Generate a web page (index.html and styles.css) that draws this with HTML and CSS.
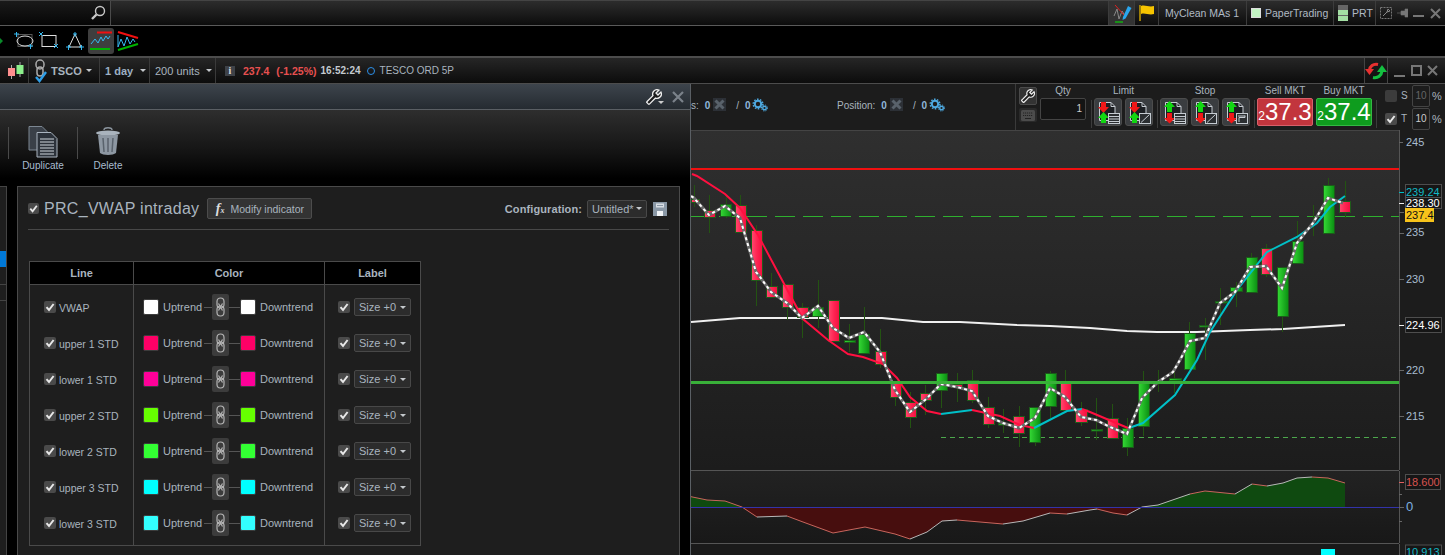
FILE: index.html
```html
<!DOCTYPE html>
<html lang="en">
<head>
<meta charset="utf-8">
<title>PRC_VWAP intraday</title>
<link rel="stylesheet" href="styles.css">
</head>
<body>
<svg class="defs" width="0" height="0" aria-hidden="true">
  <defs>
    <linearGradient id="gu" x1="0" x2="1" y1="0" y2="0"><stop offset="0" stop-color="#35d935"/><stop offset="1" stop-color="#0a8f12"/></linearGradient>
    <linearGradient id="gd" x1="0" x2="1" y1="0" y2="0"><stop offset="0" stop-color="#ff4a70"/><stop offset=".5" stop-color="#ff2452"/><stop offset="1" stop-color="#f0103f"/></linearGradient>
    <polyline id="close" points="691,196 694,198 709,215 725,206 740,218 756,272 760,277 771,292 787,303 802,318 818,306 833,328 849,338 864,332 880,352 895,390 910,412 925,400 941,384 957,387 972,391 988,416 1003,423 1019,428 1035,418 1050,388 1065,397 1081,417 1096,420 1110,427 1127,434 1142,398 1158,382 1173,372 1180,360 1190,341 1205,338 1220,303 1235,292 1250,267 1266,266 1282,288 1297,243 1313,223 1328,198 1343,203"/>
    <symbol id="tick" viewBox="0 0 12 12"><path d="M2.500 6.200 5 9l4.600-6" fill="none" stroke="#e8e8e8" stroke-width="2"/></symbol>
    <symbol id="chain" viewBox="0 0 17 26"><g fill="none" stroke="#b4b4b4" stroke-width="1.200"><rect x="5" y="4" width="7" height="10" rx="3.500"/><rect x="5" y="12" width="7" height="10" rx="3.500"/><path d="M6.500 9.500 10.500 16.500M10.500 9.500 6.500 16.500"/></g></symbol>
    <symbol id="wrench" viewBox="0 0 24 24"><path transform="translate(24 0) scale(-1 1)" d="M22.700 19l-9.100-9.100c.9-2.300.4-5-1.500-6.900-2-2-5-2.400-7.400-1.300L9 6 6 9 1.600 4.700C.4 7.100.9 10.100 2.900 12.100c1.900 1.900 4.600 2.400 6.900 1.500l9.100 9.100c.4.4 1 .4 1.400 0l2.300-2.300c.5-.4.5-1.100.1-1.400z" fill="#1c1c1c" stroke="#eee" stroke-width="2"/></symbol>
    <symbol id="gears" viewBox="0 0 16 14"><g fill="none" stroke="#4ea9e0"><circle cx="6" cy="6" r="3.200" stroke-width="2"/><circle cx="6" cy="6" r="4.800" stroke-width="1.400" stroke-dasharray="1.600 1.400"/><circle cx="12.500" cy="10" r="1.800" stroke-width="1.400"/><circle cx="12.500" cy="10" r="3" stroke-width="1" stroke-dasharray="1.200 1.200"/></g></symbol>
    <symbol id="cross" viewBox="0 0 13 13"><rect width="13" height="13" fill="#2c3036"/><path d="M2.500 2.500 10.500 10.500M10.500 2.500 2.500 10.500" stroke="#59626b" stroke-width="3"/></symbol>
    <symbol id="page" viewBox="0 0 24 24"><path d="M3.500 2.500H15l4 4v14H3.500z" fill="#1b1e22" stroke="#c6ccd2"/><path d="M15 2.500v4h4" fill="none" stroke="#c6ccd2"/></symbol>
    <symbol id="rg" viewBox="0 0 24 24"><path d="M5 2h5v5h3l-5.500 6L2 7h3z" fill="#f01818"/><path d="M7.500 12 13 18h-3v5H5v-5H2z" fill="#12d612"/></symbol>
    <symbol id="gr" viewBox="0 0 24 24"><path d="M7.500 1 13 7h-3v5H5V7H2z" fill="#12d612"/><path d="M5 13h5v5h3l-5.500 5.500L2 18h3z" fill="#f01818"/></symbol>
    <symbol id="lines" viewBox="0 0 24 24"><rect x="12.500" y="13.500" width="11" height="10" fill="#2b2e31" stroke="#c6ccd2"/><path d="M13 16.500h10M13 19h10M13 21.500h10" stroke="#c6ccd2"/></symbol>
    <symbol id="diag" viewBox="0 0 24 24"><rect x="12.500" y="13.500" width="11" height="10" fill="#2b2e31" stroke="#c6ccd2"/><path d="M14 22.500 22.500 14.500" stroke="#c6ccd2"/></symbol>
    <symbol id="step" viewBox="0 0 24 24"><rect x="12.500" y="13.500" width="11" height="10" fill="#2b2e31" stroke="#c6ccd2"/><path d="M15 22v-4.500h6v-2" fill="none" stroke="#c6ccd2"/><path d="M14 16h7" stroke="#c6ccd2"/></symbol>
  </defs>
</svg>

<div class="app">
  <header class="topbar">
    <div class="search">
      <svg class="ico-search" viewBox="0 0 16 16"><circle cx="10" cy="6" r="4.500" fill="none" stroke="#c8c8c8" stroke-width="1.400"/><path d="M6.500 9.500 2 14" stroke="#c8c8c8" stroke-width="2.400"/></svg>
    </div>
    <div class="grow"></div>
    <div class="top-cell pen"><svg width="20" height="20" viewBox="0 0 20 20"><path d="M2 13 5 6l2 10 3-8 2 3" fill="none" stroke="#888"/><path d="M3 2l9 10" stroke="#e02020"/><path d="M3 19h8" stroke="#12b012" stroke-width="1.500"/><path d="M11 14 16 3l3.500 2-6 10.500-3 1.500z" fill="#2aa6ee"/></svg></div>
    <div class="top-cell flag"><svg width="16" height="18" viewBox="0 0 16 18"><path d="M1 1v16" stroke="#c99f00" stroke-width="1.500"/><path d="M2 2c4-1.500 8 1.500 13 0v8c-5 1.500-9-1.500-13 0z" fill="#f6c400"/></svg></div>
    <div class="top-cell txt w88">MyClean MAs 1</div>
    <div class="top-cell txt w87"><span class="paper"></span>PaperTrading</div>
    <div class="top-cell txt w42"><span class="prt"><i></i><i></i></span>PRT</div>
    <div class="win-tools">
      <svg class="dash-w" width="12" height="12" viewBox="0 0 12 12"><rect x=".5" y=".5" width="11" height="11" fill="none" stroke="#777" stroke-dasharray="2 1"/><path d="M3 9 7 5l1-3 2 2-3 1" fill="none" stroke="#888"/></svg>
      <svg width="11" height="10" viewBox="0 0 11 10"><path d="M0 5h4M4 3h4V1l3 0v8H8V7H4z" fill="#777" stroke="#777" stroke-width=".6"/></svg>
      <span class="min"></span>
      <svg width="11" height="11" viewBox="0 0 11 11"><path d="M1 1 10 10M10 1 1 10" stroke="#777" stroke-width="2"/></svg>
    </div>
  </header>

  <nav class="tools">
    <span class="stub"></span>
    <svg class="tool t-first" width="20" height="20" viewBox="0 0 20 20"><rect x="4" y="3.500" width="14" height="12" fill="none" stroke="#555"/><ellipse cx="11" cy="10" rx="8" ry="5" fill="none" stroke="#ddd"/><path d="M0 3h5M2.500 1v5M14 15h5M16.500 13v5" stroke="#35b8f0"/></svg>
    <svg class="tool" width="22" height="20" viewBox="0 0 22 20"><rect x="4" y="4.500" width="14" height="11" fill="none" stroke="#ddd"/><path d="M1 1 5 5M5 1 1 5M16 13l4 4M20 13l-4 4" stroke="#35b8f0"/></svg>
    <svg class="tool t-last" width="20" height="20" viewBox="0 0 20 20"><path d="M10 3 4 16h12z" fill="none" stroke="#ddd"/><path d="M10 1v5M8 3h4M1 16h5M3.500 14v5M14 16h5M16.500 14v5" stroke="#35b8f0"/></svg>
    <div class="tool-on"><svg width="22" height="20" viewBox="0 0 22 20"><path d="M7 1.500h15" stroke="#f01010" stroke-width="2"/><path d="M0 18h20" stroke="#00b400" stroke-width="2"/><path d="M1 13l4-5 3 4 3-6 2 4 3-5 2 3 2-3" fill="none" stroke="#35b8f0"/></svg></div>
    <svg class="tool tri" width="22" height="20" viewBox="0 0 22 20"><path d="M1 1 21 7" stroke="#f01010" stroke-width="2"/><path d="M1 19 21 13" stroke="#00b400" stroke-width="2"/><path d="M1 4v12l3-8 3 7 3-9 3 7 3-5 2 3" fill="none" stroke="#35b8f0"/></svg>
  </nav>

  <div class="chart-head">
    <div class="ch-cell candle"><svg width="18" height="18" viewBox="0 0 18 18"><path d="M4.500 3v14M13 0v15" stroke="#aaa"/><rect x="1" y="6" width="7" height="8" fill="#ff8f8f"/><rect x="9.500" y="3" width="7" height="9" fill="#8cf08c"/></svg></div>
    <div class="ch-cell sym"><svg width="14" height="24" viewBox="0 0 14 24"><g fill="none" stroke="#aaa" stroke-width="1.500"><rect x="2" y="1" width="8" height="9" rx="4"/><rect x="3" y="8" width="6" height="9" rx="3"/></g><path d="M2 18l3.500 4L12 13" fill="none" stroke="#2f9fe8" stroke-width="2.400"/></svg><b class="tick-name">TSCO</b><span class="caret"></span></div>
    <div class="ch-cell day"><b>1 day</b><span class="caret"></span></div>
    <div class="ch-cell units">200 units<span class="caret"></span></div>
    <div class="quote">
      <span class="info">i</span>
      <b class="red">237.4</b>
      <b class="red pct">(-1.25%)</b>
      <b class="time">16:52:24</b>
      <span class="dot"></span>
      <span class="name">TESCO ORD 5P</span>
    </div>
    <div class="grow"></div>
    <div class="sync"><svg width="22" height="20" viewBox="0 0 22 20"><path d="M13 3.500C8 2.500 5 5.500 4.500 9" fill="none" stroke="#e83030" stroke-width="3"/><path d="M0 8h9l-4.500 6z" fill="#e83030"/><path d="M8 16.500c5 1 8.500-2 9-6.500" fill="none" stroke="#14c040" stroke-width="3"/><path d="M12 11h10l-5-7z" fill="#14c040"/></svg></div>
    <div class="win-tools wide">
      <span class="min"></span>
      <span class="max"></span>
      <svg width="11" height="11" viewBox="0 0 11 11"><path d="M1 1 10 10M10 1 1 10" stroke="#777" stroke-width="2"/></svg>
    </div>
  </div>

  <main class="work">
    <section class="dialog">
      <div class="dlg-title">
        <svg class="dlg-wrench" width="16" height="16"><use href="#wrench"/></svg>
        <span class="wr-caret"></span>
        <svg width="12" height="12" viewBox="0 0 12 12"><path d="M1 1 11 11M11 1 1 11" stroke="#7b828a" stroke-width="2.200"/></svg>
      </div>
      <div class="dlg-tools">
        <span class="vsep"></span>
        <div class="act dup">
          <svg width="30" height="32" viewBox="0 0 30 32"><path d="M1 .500H14l5 5V24H1z" fill="#3a4048" stroke="#7c8792"/><path d="M9 6.500H23l6 6V31H9z" fill="#2c323a" stroke="#aab4bf"/><path d="M12 13h14M12 16h14M12 19h14M12 22h14M12 25h14M12 28h14" stroke="#cfd6dc"/></svg>
          <span>Duplicate</span>
        </div>
        <span class="vsep"></span>
        <div class="act del">
          <svg width="26" height="28" viewBox="0 0 26 28"><ellipse cx="13" cy="6" rx="12" ry="2.600" fill="#a9b3bd"/><path d="M9 3c0-3 8-3 8 0" fill="none" stroke="#8a939c" stroke-width="1.500"/><path d="M3 8h20l-2 18c-3 2.500-13 2.500-16 0z" fill="#8d97a2"/><path d="M8 11l1 14M13 11v14M18 11l-1 14" stroke="#59626c" stroke-width="1.500"/></svg>
          <span>Delete</span>
        </div>
      </div>
      <div class="dlg-body">
        <aside class="side">
          <div class="side-sel"></div>
          <div class="side-row"></div>
        </aside>
        <div class="panel">
          <div class="panel-head">
            <label class="title"><span class="chk small"><svg><use href="#tick"/></svg></span>PRC_VWAP intraday</label>
            <button class="modify"><i class="fx">f<sub>x</sub></i>Modify indicator</button>
            <div class="grow"></div>
            <b class="conf">Configuration:</b>
            <span class="select conf-sel">Untitled*<span class="caret"></span></span>
            <svg class="save" width="14" height="14" viewBox="0 0 14 14"><path d="M0 0h14v14H0z" fill="#8a98a6"/><path d="M3 1.500h8v4H3z" fill="#d8dee4"/><path d="M4 3.500h6" stroke="#8a98a6"/><path d="M4 9h6v5H4z" fill="#f0f3f5"/></svg>
          </div>
          <table class="lines">
            <thead><tr><th class="c1">Line</th><th class="c2">Color</th><th class="c3">Label</th></tr></thead>
            <tbody>
              <tr class="first"><td><div class="line-cell"><span class="chk"><svg><use href="#tick"/></svg></span><span class="ln">VWAP</span></div></td>
                <td><div class="color-cell"><span class="sw sw-white"></span><span class="up">Uptrend</span><span class="dash"></span><span class="link"><svg width="17" height="26"><use href="#chain"/></svg></span><span class="dash dash-r"></span><span class="sw sw-white"></span><span class="down">Downtrend</span></div></td>
                <td><div class="label-cell"><span class="chk"><svg><use href="#tick"/></svg></span><span class="select">Size +0<span class="caret"></span></span></div></td></tr>
              <tr><td><div class="line-cell"><span class="chk"><svg><use href="#tick"/></svg></span><span class="ln">upper 1 STD</span></div></td>
                <td><div class="color-cell"><span class="sw sw-u1"></span><span class="up">Uptrend</span><span class="dash"></span><span class="link"><svg width="17" height="26"><use href="#chain"/></svg></span><span class="dash dash-r"></span><span class="sw sw-u1"></span><span class="down">Downtrend</span></div></td>
                <td><div class="label-cell"><span class="chk"><svg><use href="#tick"/></svg></span><span class="select">Size +0<span class="caret"></span></span></div></td></tr>
              <tr><td><div class="line-cell"><span class="chk"><svg><use href="#tick"/></svg></span><span class="ln">lower 1 STD</span></div></td>
                <td><div class="color-cell"><span class="sw sw-l1"></span><span class="up">Uptrend</span><span class="dash"></span><span class="link"><svg width="17" height="26"><use href="#chain"/></svg></span><span class="dash dash-r"></span><span class="sw sw-l1"></span><span class="down">Downtrend</span></div></td>
                <td><div class="label-cell"><span class="chk"><svg><use href="#tick"/></svg></span><span class="select">Size +0<span class="caret"></span></span></div></td></tr>
              <tr><td><div class="line-cell"><span class="chk"><svg><use href="#tick"/></svg></span><span class="ln">upper 2 STD</span></div></td>
                <td><div class="color-cell"><span class="sw sw-u2"></span><span class="up">Uptrend</span><span class="dash"></span><span class="link"><svg width="17" height="26"><use href="#chain"/></svg></span><span class="dash dash-r"></span><span class="sw sw-u2"></span><span class="down">Downtrend</span></div></td>
                <td><div class="label-cell"><span class="chk"><svg><use href="#tick"/></svg></span><span class="select">Size +0<span class="caret"></span></span></div></td></tr>
              <tr><td><div class="line-cell"><span class="chk"><svg><use href="#tick"/></svg></span><span class="ln">lower 2 STD</span></div></td>
                <td><div class="color-cell"><span class="sw sw-l2"></span><span class="up">Uptrend</span><span class="dash"></span><span class="link"><svg width="17" height="26"><use href="#chain"/></svg></span><span class="dash dash-r"></span><span class="sw sw-l2"></span><span class="down">Downtrend</span></div></td>
                <td><div class="label-cell"><span class="chk"><svg><use href="#tick"/></svg></span><span class="select">Size +0<span class="caret"></span></span></div></td></tr>
              <tr><td><div class="line-cell"><span class="chk"><svg><use href="#tick"/></svg></span><span class="ln">upper 3 STD</span></div></td>
                <td><div class="color-cell"><span class="sw sw-u3"></span><span class="up">Uptrend</span><span class="dash"></span><span class="link"><svg width="17" height="26"><use href="#chain"/></svg></span><span class="dash dash-r"></span><span class="sw sw-u3"></span><span class="down">Downtrend</span></div></td>
                <td><div class="label-cell"><span class="chk"><svg><use href="#tick"/></svg></span><span class="select">Size +0<span class="caret"></span></span></div></td></tr>
              <tr class="last"><td><div class="line-cell"><span class="chk"><svg><use href="#tick"/></svg></span><span class="ln">lower 3 STD</span></div></td>
                <td><div class="color-cell"><span class="sw sw-l3"></span><span class="up">Uptrend</span><span class="dash"></span><span class="link"><svg width="17" height="26"><use href="#chain"/></svg></span><span class="dash dash-r"></span><span class="sw sw-l3"></span><span class="down">Downtrend</span></div></td>
                <td><div class="label-cell"><span class="chk"><svg><use href="#tick"/></svg></span><span class="select">Size +0<span class="caret"></span></span></div></td></tr>
            </tbody>
          </table>
        </div>
      </div>
    </section>

    <section class="chart-pane">
      <div class="order">
        <div class="counts">
          <span class="cnt c-a">s:<em>0</em><svg width="13" height="13"><use href="#cross"/></svg><span class="slash">/ <em class="e2">0</em></span><svg class="gr" width="16" height="14"><use href="#gears"/></svg></span>
          <span class="cnt c-b">Position:<em>0</em><svg width="13" height="13"><use href="#cross"/></svg><span class="slash">/ <em class="e2">0</em></span><svg class="gr" width="16" height="14"><use href="#gears"/></svg></span>
        </div>
        <div class="order-tools">
          <button class="sq sq-w"><svg width="14" height="14"><use href="#wrench"/></svg></button>
          <button class="sq sq-k"><svg width="14" height="11" viewBox="0 0 14 11"><rect width="14" height="11" rx="1.500" fill="#4c4c4c"/><path d="M2 3h10M2 5.500h10" stroke="#222" stroke-dasharray="1.200 .8"/><path d="M4 8.500h6" stroke="#222"/></svg></button>
        </div>
        <div class="og og-qty"><span class="og-l">Qty</span><span class="qty">1</span></div>
        <span class="osep"></span>
        <div class="og og-limit"><span class="og-l">Limit</span><div class="btns">
          <button class="ob"><svg width="24" height="24"><use href="#page"/><use href="#rg"/><use href="#lines"/></svg></button>
          <button class="ob"><svg width="24" height="24"><use href="#page"/><use href="#rg"/><use href="#diag"/></svg></button>
        </div></div>
        <span class="osep"></span>
        <div class="og og-stop"><span class="og-l">Stop</span><div class="btns">
          <button class="ob"><svg width="24" height="24"><use href="#page"/><use href="#gr"/><use href="#lines"/></svg></button>
          <button class="ob"><svg width="24" height="24"><use href="#page"/><use href="#gr"/><use href="#diag"/></svg></button>
          <button class="ob"><svg width="24" height="24"><use href="#page"/><use href="#gr"/><use href="#step"/></svg></button>
        </div></div>
        <span class="osep"></span>
        <div class="og og-mkt"><span class="og-l">Sell MKT</span><div class="mkt sell"><small>2</small>37.3</div></div>
        <div class="og og-mkt og-buy"><span class="og-l">Buy MKT</span><div class="mkt buy"><small>2</small>37.4</div></div>
        <span class="osep"></span>
        <div class="st">
          <div class="st-row"><span class="chk big off"></span><span class="st-l">S</span><span class="pctbox dim">10</span><span class="pc">%</span></div>
          <div class="st-row"><span class="chk big"><svg><use href="#tick"/></svg></span><span class="st-l">T</span><span class="pctbox">10</span><span class="pc">%</span></div>
        </div>
      </div>

      <div class="charts">
        <svg class="plot" viewBox="691 130 708 340" width="708" height="340">
          <path class="p-top" d="M691 130.500H1399"/>
          <path class="r-line" d="M691 169H1399"/>
          <path class="g-dash" d="M691 216.500H1399"/>
          <path class="g-short" d="M941 437.500H1399"/>
          <polyline class="vwap" points="691,322 740,318 882,318 923,322 960,322 1017,325 1050,326 1090,328 1127,331 1157,332 1197,332 1250,330 1283,329 1345,325"/>
          <path class="wick" d="M694.500 185V207M709.500 195V233M726.500 195V218M740.500 195V232M756.500 225V306M771.500 273V297M787.500 284V320M802.500 303V338M818.500 280V328M833.500 300V341M849.500 324V352M864.500 307V334M880.500 329V368M895.500 382V406M910.500 392V428M925.500 385V415M941.500 373V408M957.500 373V402M972.500 370V403M988.500 397V428M1003.500 409V433M1019.500 406V447M1035.500 407V446M1050.500 371V418M1065.500 370V410M1081.500 402V426M1096.500 398V440M1112.500 404V438M1127.500 418V456M1143.500 371V436M1158.500 370V392M1174.500 372V393M1189.500 322V369M1205.500 318V360M1220.500 288V325M1236.500 282V307M1251.500 253V292M1266.500 244V277M1282.500 316V332M1297.500 221V263M1313.500 205V236M1328.500 178V233M1345.500 181V218"/>
          <g class="dn">
            <rect x="691.500" y="199.500" width="8" height="3"/>
            <rect x="704.500" y="210.500" width="11" height="7"/>
            <rect x="735.500" y="205.500" width="11" height="27"/>
            <rect x="751.500" y="230.500" width="11" height="50"/>
            <rect x="766.500" y="286.500" width="11" height="11"/>
            <rect x="782.500" y="284.500" width="11" height="23"/>
            <rect x="797.500" y="307.500" width="11" height="10"/>
            <rect x="828.500" y="300.500" width="11" height="41"/>
            <rect x="875.500" y="351.500" width="11" height="13"/>
            <rect x="890.500" y="382.500" width="11" height="15"/>
            <rect x="905.500" y="402.500" width="11" height="15"/>
            <rect x="920.500" y="393.500" width="11" height="7"/>
            <rect x="951.500" y="384.500" width="11" height="3"/>
            <rect x="967.500" y="380.500" width="11" height="20"/>
            <rect x="983.500" y="407.500" width="11" height="17"/>
            <rect x="1013.500" y="416.500" width="11" height="17"/>
            <rect x="1060.500" y="382.500" width="11" height="28"/>
            <rect x="1075.500" y="409.500" width="12" height="13"/>
            <rect x="1107.500" y="418.500" width="11" height="20"/>
            <rect x="1261.500" y="248.500" width="11" height="26"/>
            <rect x="1339.500" y="201.500" width="11" height="11"/>
          </g>
          <g class="up">
            <rect x="720.500" y="204.500" width="11" height="12"/>
            <rect x="812.500" y="307.500" width="11" height="9"/>
            <rect x="844.500" y="340.500" width="11" height="2"/>
            <rect x="858.500" y="334.500" width="11" height="19"/>
            <rect x="936.500" y="373.500" width="11" height="17"/>
            <rect x="998.500" y="423.500" width="11" height="1.500"/>
            <rect x="1029.500" y="407.500" width="11" height="35"/>
            <rect x="1045.500" y="373.500" width="11" height="33"/>
            <rect x="1091.500" y="429.500" width="11" height="1.500"/>
            <rect x="1122.500" y="428.500" width="11" height="19"/>
            <rect x="1138.500" y="383.500" width="11" height="43"/>
            <rect x="1169.500" y="378.500" width="12" height="2"/>
            <rect x="1184.500" y="333.500" width="11" height="36"/>
            <rect x="1199.500" y="325.500" width="11" height="1.500"/>
            <rect x="1215.500" y="301.500" width="12" height="1.500"/>
            <rect x="1230.500" y="287.500" width="12" height="4"/>
            <rect x="1246.500" y="257.500" width="11" height="35"/>
            <rect x="1277.500" y="267.500" width="11" height="49"/>
            <rect x="1292.500" y="241.500" width="11" height="22"/>
            <rect x="1323.500" y="185.500" width="11" height="48"/>
          </g>
          <polyline class="ma-red" points="692,174 697,176 725,194 740,208 758,235 782,280 803,319 828,340 848,354 863,357 883,364 897,378 910,397 927,411 941,414"/>
          <polyline class="ma-cyan" points="941,414 972,410"/>
          <polyline class="ma-red" points="972,410 1000,416 1020,425 1034,428"/>
          <polyline class="ma-cyan" points="1034,428 1067,411 1082,409"/>
          <polyline class="ma-red" points="1082,409 1090,412 1128,428"/>
          <polyline class="ma-cyan" points="1129,428 1143,423 1175,395 1197,360 1210,332 1237,290 1267,252 1297,237 1317,223 1330,207 1345,196"/>
          <use class="cl-bg" href="#close"/>
          <use class="cl-fg" href="#close"/>
          <path class="g-solid" d="M691 382.500H1399"/>
        </svg>
        <svg class="axis" viewBox="1399 130 46 340" width="46" height="340">
          <path class="ax-line" d="M1399.500 130V470"/>
          <path class="ax-tick" d="M1399 142.500h4M1399 233.500h5M1399 279.500h5M1399 370.500h5M1399 416.500h5M1399 212.500h5"/>
          <path class="ax-tick-w" d="M1399 203.500h5M1399 325.500h5"/>
          <path class="ax-tick-c" d="M1399 192.500h5"/>
          <text x="1406" y="146">245</text>
          <rect class="lb" x="1405.500" y="184.500" width="36" height="14"/>
          <text class="t-cyan" x="1406" y="196">239.24</text>
          <rect class="lb" x="1405.500" y="197.500" width="36" height="11"/>
          <text class="t-white" x="1406" y="207">238.30</text>
          <rect class="lb-y" x="1405" y="208" width="29" height="14"/>
          <text class="t-black" x="1406" y="219">237.4</text>
          <text x="1406" y="236">235</text>
          <text x="1406" y="283">230</text>
          <rect class="lb" x="1405.500" y="317.500" width="36" height="15"/>
          <text class="t-white" x="1406" y="329">224.96</text>
          <text x="1406" y="374">220</text>
          <text x="1406" y="420">215</text>
        </svg>
        <svg class="plot2" viewBox="691 471 708 72" width="708" height="72">
          <path class="a-gr" d="M691 496.700 707 500 725 501 742 507H691z"/>
          <path class="a-rd" d="M742 507 757 517 787 516 803 522 833 533 865 527 895 534 910 539 927 532 942 521 957 520 1003 524 1023 521 1050 513 1067 514 1090 510 1097 509 1113 513 1127 515 1142 507z"/>
          <path class="a-gr" d="M1142 507 1158 505 1190 494 1205 491 1235 494 1252 484 1267 486 1283 483 1297 478 1312 477 1328 478 1345 483V507z"/>
          <polyline class="o-rd" points="691,496.700 707,500 725,501 742,507 757,517"/>
          <polyline class="o-gy" points="757,517 787,516"/>
          <polyline class="o-rd" points="787,516 803,522 833,533 865,527 895,534 910,539"/>
          <polyline class="o-gy" points="910,539 927,532 942,521 957,520"/>
          <polyline class="o-rd" points="957,520 1003,524"/>
          <polyline class="o-gy" points="1003,524 1023,521 1050,513"/>
          <polyline class="o-rd" points="1050,513 1067,514"/>
          <polyline class="o-gy" points="1067,514 1090,510 1097,509"/>
          <polyline class="o-rd" points="1097,509 1113,513 1127,515"/>
          <polyline class="o-gy" points="1127,515 1142,507 1158,505 1190,494"/>
          <polyline class="o-rd" points="1190,494 1205,491 1235,494"/>
          <polyline class="o-gy" points="1235,494 1252,484"/>
          <polyline class="o-rd" points="1252,484 1267,486"/>
          <polyline class="o-gy" points="1267,486 1283,483 1297,478 1312,477"/>
          <polyline class="o-rd" points="1312,477 1328,478 1345,483"/>
          <path class="zero" d="M691 507.500H1399"/>
        </svg>
        <svg class="axis2" viewBox="1399 471 46 72" width="46" height="72">
          <path class="ax-line" d="M1399.500 471V543"/>
          <path class="ax-tick-r" d="M1399 482.500h5"/>
          <path class="ax-tick" d="M1399 494.500h3M1399 507.500h5M1399 521.500h3"/>
          <rect class="lb" x="1405.500" y="474.500" width="35" height="15"/>
          <text class="t-red" x="1406" y="486">18.600</text>
          <text class="t-zero" x="1406" y="511">0</text>
        </svg>
        <svg class="plot3" viewBox="691 544 708 11" width="708" height="11"><rect class="mark" x="1321" y="549" width="14" height="6"/></svg>
        <svg class="axis3" viewBox="1399 544 46 11" width="46" height="11">
          <path class="ax-line" d="M1399.500 544V555"/>
          <rect class="lb" x="1405.500" y="545" width="36" height="14"/>
          <text class="t-cyan" x="1406" y="556">10.913</text>
        </svg>
      </div>
    </section>
  </main>
</div>
</body>
</html>
```

FILE: styles.css
```css
* { box-sizing: border-box; }
html, body { margin: 0; height: 100%; background: #000; overflow: hidden; }
body { font: 11px "Liberation Sans", Arial, sans-serif; color: #a9b4bf; }
.defs { position: absolute; }
button { font: inherit; color: inherit; padding: 0; }
svg { display: block; }
.grow { flex: 1; }
.app { width: 1445px; height: 555px; display: flex; flex-direction: column; }

.topbar { height: 26px; display: flex; background: linear-gradient(#2c2c2c, #2a2a2a 8%, #0c0c0c); border-top: 1px solid #444; border-bottom: 1px solid #5a5a5a; }
.search { width: 111px; border-right: 1px solid #4a4a4a; background: linear-gradient(#1a1a1a, #060606); display: flex; align-items: center; justify-content: flex-end; padding-right: 4px; }
.ico-search { width: 16px; height: 16px; }
.top-cell { display: flex; align-items: center; border-left: 1px solid #3c3c3c; height: 100%; color: #b0bac4; }
.pen { width: 26px; justify-content: center; background: #333; }
.flag { width: 24px; justify-content: center; }
.txt { padding-left: 6px; font-size: 10.500px; }
.w88 { width: 88px; }
.w87 { width: 87px; padding-left: 4px; }
.w42 { width: 42px; padding-left: 4px; }
.paper { width: 10px; height: 10px; background: #c4f5c4; border: 1px solid #ddd; margin-right: 4px; }
.prt { width: 10px; height: 16px; background: #666; display: flex; flex-direction: column; justify-content: flex-end; gap: 1px; margin-right: 4px; }
.prt i { display: block; height: 5px; background: #a4e0a4; }
.win-tools { width: 70px; display: flex; align-items: center; gap: 5px; padding-left: 4px; border-left: 1px solid #3c3c3c; }
.min { width: 11px; height: 2px; background: #777; align-self: flex-end; margin: 0 1px 8px 0; }
.max { width: 11px; height: 11px; border: 2px solid #777; }

.tools { height: 30px; display: flex; align-items: center; background: #000; }
.stub { width: 0; height: 0; border: 3px solid transparent; border-left: 3px solid #0a8a2a; border-right: 0; }
.t-first { margin-left: 11px; }
.tool { margin-right: 4px; flex: none; }
.t-last { margin: 0 0 0 1px; }
.tool-on { width: 26px; height: 26px; margin-left: 3px; background: #3e3e3e; border-radius: 3px; display: flex; align-items: center; justify-content: center; }
.tri { margin-left: 3px; }

.chart-head { height: 28px; display: flex; align-items: stretch; background: linear-gradient(#262626, #0c0c0c); border-top: 2px solid #4c4c4c; border-bottom: 1px solid #4c4c4c; }
.ch-cell { display: flex; align-items: center; border-right: 1px solid #3a3a3a; color: #a9b4bf; }
.candle { width: 29px; padding-left: 7px; }
.sym { width: 71px; padding-left: 5px; }
.tick-name { margin-left: 3px; letter-spacing: .1px; color: #a9b4bf; }
.caret { display: inline-block; width: 0; height: 0; border: 3px solid transparent; border-top: 3px solid #c4c8cc; border-bottom: 0; margin-left: 6px; }
.sym .caret { margin-left: 4px; }
.day { width: 50px; padding-left: 5px; }
.day b { color: #9db0c4; }
.day .caret { margin-left: 7px; }
.units { width: 66px; padding-left: 5px; }
.quote { display: flex; align-items: center; padding-left: 9px; font-size: 10.500px; white-space: nowrap; }
.info { width: 10px; height: 10px; background: #3e4248; color: #ddd; font: bold 10px/10px "Liberation Serif", serif; text-align: center; margin-right: 8px; }
.red { color: #e85050; }
.pct { margin-left: 7px; }
.time { margin-left: 4px; color: #c4cad0; font-size: 10px; }
.dot { width: 8px; height: 8px; border-radius: 50%; border: 1px solid #2c8fe8; margin: 0 5px 0 6px; }
.name { color: #a9b4bf; font-size: 10px; }
.sync { width: 24px; margin-right: 6px; background: linear-gradient(#1c1c1c, #101010); border-left: 1px solid #444; border-right: 1px solid #444; display: flex; align-items: center; justify-content: center; }
.wide { width: 47px; border-left: 0; gap: 5px; padding-left: 0; margin-right: 4px; }
.wide .min { margin-bottom: 6px; }

.work { flex: 1; display: flex; min-height: 0; }

.dialog { width: 691px; flex: none; display: flex; flex-direction: column; border-right: 1px solid #5a5f64; background: #000; }
.dlg-title { height: 26px; flex: none; display: flex; align-items: center; justify-content: flex-end; gap: 6px; padding-right: 6px; background: linear-gradient(#3d444c, #252b31); border-bottom: 1px solid #5a5f64; position: relative; }
.dlg-wrench { margin-right: 4px; }
.wr-caret { position: absolute; right: 26px; bottom: 5px; border: 3px solid transparent; border-top: 3px solid #ccc; border-bottom: 0; }
.dlg-tools { height: 76px; flex: none; background: linear-gradient(#2e2e2e, #141414 55%, #000 90%); display: flex; align-items: flex-start; padding: 16px 0 0 8px; }
.vsep { width: 1px; height: 32px; margin-top: 1px; background: #4a4a4a; }
.act { display: flex; flex-direction: column; align-items: center; gap: 2px; color: #a9bdd0; font-size: 10px; }
.dup { width: 68px; }
.del { width: 60px; }
.del svg { margin: 1px 0 3px; }
.dlg-body { flex: 1; min-height: 0; display: flex; }
.side { width: 7px; background: #1e1e1e; border-right: 1px solid #444; border-top: 1px solid #444; padding-top: 64px; }
.side-sel { height: 16px; background: #0078d7; }
.side-row { height: 17px; margin-top: 17px; border-top: 1px solid #444; border-bottom: 1px solid #444; }
.panel { width: 663px; margin-left: 10px; background: #1e1e1e; border: 1px solid #4a4a4a; border-bottom: 0; padding: 11px 10px 0; }
.panel-head { height: 32px; padding-bottom: 10px; display: flex; align-items: center; border-bottom: 1px solid #484848; }
.title { display: flex; align-items: center; font-size: 16px; letter-spacing: .3px; color: #a9b4bf; }
.chk { width: 12px; height: 12px; background: #4a4a4a; border-radius: 2px; flex: none; display: block; }
.chk svg { width: 100%; height: 100%; }
.small { width: 11px; height: 11px; margin-right: 5px; }
.modify { width: 105px; height: 21px; margin-left: 8px; background: #333; border: 1px solid #4c4c4c; border-radius: 2px; display: flex; align-items: center; justify-content: center; font-size: 10.500px; color: #a9b4bf; }
.fx { font: bold italic 14px/1 "Liberation Serif", serif; color: #ddd; margin-right: 6px; }
.fx sub { font-size: 8px; vertical-align: baseline; }
.conf { color: #aab4be; margin-right: 5px; letter-spacing: .1px; }
.select { height: 18px; display: flex; align-items: center; justify-content: space-between; background: #2c2c2c; border: 1px solid #484848; border-radius: 2px; padding: 0 4px; color: #a9b4bf; }
.select .caret { margin-left: 0; }
.conf-sel { width: 60px; }
.save { margin: 0 2px 0 6px; }

.lines { margin: 31px 0 0 1px; border-collapse: collapse; table-layout: fixed; width: 391px; }
.lines th, .lines td { border: 1px solid #4a4a4a; padding: 0; }
.lines th { height: 23px; background: #000; font-weight: bold; color: #a9b4bf; }
.c1 { width: 104px; } .c2 { width: 191px; } .c3 { width: 96px; }
.lines tbody td { border-top: 0; border-bottom: 0; }
.lines tbody tr.last td { border-bottom: 1px solid #4a4a4a; }
.first td > div { margin-top: 4px; }
.last td > div { margin-bottom: 4px; }
.line-cell, .color-cell, .label-cell { height: 36px; display: flex; align-items: center; }
.line-cell { padding-left: 14px; }
.ln { margin-left: 3px; padding-top: 2px; white-space: nowrap; font-size: 10.500px; }
.color-cell { padding-left: 9px; white-space: nowrap; }
.sw { width: 16px; height: 16px; border: 1px solid #3c3c3c; border-radius: 2px; flex: none; }
.sw-white { background: #fff; }
.sw-u1 { background: #ff0066; }
.sw-l1 { background: #ff0099; }
.sw-u2 { background: #66ff00; }
.sw-l2 { background: #33ff33; }
.sw-u3 { background: #00ffff; }
.sw-l3 { background: #33ffff; }
.up { margin-left: 4px; width: 41px; flex: none; }
.down { margin-left: 4px; }
.dash { width: 8px; height: 1px; background: #555; flex: none; }
.dash-r { width: 11px; }
.link { width: 17px; height: 26px; flex: none; background: #3c3c3c; border-radius: 2px; }
.label-cell { padding-left: 13px; gap: 4px; }
.label-cell .select { width: 57px; }

.chart-pane { flex: 1; min-width: 0; display: flex; flex-direction: column; }
.order { height: 46px; flex: none; display: flex; background: #1c1c1c; position: relative; }
.counts { width: 325px; flex: none; display: flex; padding-top: 16px; font-size: 10px; border-right: 1px solid #3a3a3a; }
.cnt { display: flex; align-items: flex-start; color: #a9b4bf; }
.cnt em { font-style: normal; font-weight: bold; color: #8fb6da; margin-left: 6px; }
.cnt .e2 { margin-left: 3px; }
.cnt svg { margin-left: 3px; margin-top: -2px; }
.cnt .gr { margin-left: 2px; }
.slash { margin-left: 10px; }
.c-a { width: 146px; }
.order-tools { width: 24px; flex: none; display: flex; flex-direction: column; gap: 3px; padding: 3px 0 0 3px; }
.sq { width: 18px; height: 18px; background: #333; border: 1px solid #4a4a4a; border-radius: 2px; display: flex; align-items: center; justify-content: center; }
.sq-k { height: 14px; background: #2a2a2a; border: 0; }
.og { display: flex; flex-direction: column; align-items: center; padding-top: 1px; flex: none; }
.og-l { height: 13px; line-height: 12px; color: #a9b4bf; font-size: 10px; }
.og-qty { width: 49px; align-items: flex-start; }
.og-qty .og-l { width: 46px; text-align: center; }
.qty { width: 46px; height: 22px; background: #141414; border: 1px solid #444; border-radius: 2px; text-align: right; line-height: 20px; padding-right: 3px; color: #ccc; font-size: 10px; }
.osep { width: 1px; height: 28px; margin: 16px 2px 0; background: #3c3c3c; flex: none; }
.btns { display: flex; gap: 3px; }
.ob { width: 28px; height: 28px; background: #3a3d40; border: 1px solid #4c4c4c; border-radius: 3px; display: flex; align-items: center; justify-content: center; }
.og-limit { width: 59px; margin-right: 2px; }
.og-stop { width: 90px; margin-right: 2px; }
.og-mkt { width: 56px; margin-right: 3px; }
.og-buy { margin-right: 2px; }
.mkt { width: 56px; height: 28px; border-radius: 2px; color: #fff; font-size: 24px; line-height: 26px; white-space: nowrap; text-align: center; }
.mkt small { font-size: 12px; }
.sell { background: #c2353d; border: 1px solid #d8606a; }
.buy { background: #0e9c1e; border: 1px solid #33b844; }
.st { margin-left: 6px; display: flex; flex-direction: column; }
.st-row { height: 23px; display: flex; align-items: center; }
.big { width: 12px; height: 12px; }
.off { background: #3c3c3c; }
.st-l { width: 15px; padding-left: 4px; color: #a9b4bf; font-size: 10px; }
.pctbox { width: 18px; height: 22px; border: 1px solid #444; border-radius: 2px; text-align: center; line-height: 20px; font-size: 10px; color: #ccc; }
.dim { color: #666; }
.pc { margin-left: 2px; color: #a9b4bf; font-size: 11px; }

.charts { flex: 1; min-height: 0; display: grid; grid-template-columns: 708px 46px; grid-template-rows: 340px 1px 72px 1px 11px; background: #1c1c1c; }
.plot { background: linear-gradient(#2f2f2f, #1c1c1c); grid-row: 1; }
.axis { grid-row: 1; }
.plot2 { grid-row: 3; grid-column: 1; background: linear-gradient(#222, #181818); }
.axis2 { grid-row: 3; grid-column: 2; }
.plot3 { grid-row: 5; grid-column: 1; background: #1a1a1a; }
.axis3 { grid-row: 5; grid-column: 2; }
.charts::before, .charts::after { content: ""; background: #555; grid-column: 1 / 2; }
.charts::before { grid-row: 2; }
.charts::after { grid-row: 4; }

.plot, .plot2, .plot3 { overflow: hidden; }
.p-top { stroke: #444; }
.r-line { stroke: #f01010; stroke-width: 2; }
.g-dash { stroke: #2faf2f; stroke-width: 1; stroke-dasharray: 20 8; }
.g-short { stroke: #4ca84c; stroke-dasharray: 5 4; }
.g-solid { stroke: #39b039; stroke-width: 3; }
.vwap { fill: none; stroke: #f0f0f0; stroke-width: 2; }
.wick { stroke: #235312; stroke-width: 1; }
.dn rect { fill: url(#gd); stroke: #1f5a1a; }
.up rect { fill: url(#gu); stroke: #1c5a1a; }
.ma-red { fill: none; stroke: #ff1040; stroke-width: 2; }
.ma-cyan { fill: none; stroke: #00c0c8; stroke-width: 2; }
.cl-bg { fill: none; stroke: #6a6a6a; stroke-width: 3; }
.cl-fg { fill: none; stroke: #fff; stroke-width: 2; stroke-dasharray: 3 3; }

.axis text, .axis2 text, .axis3 text { font: 11px "Liberation Sans", Arial, sans-serif; fill: #a9bdd0; }
.ax-line { stroke: #555; }
.ax-tick { stroke: #666; }
.ax-tick-w { stroke: #eee; }
.ax-tick-c { stroke: #00c0c8; }
.ax-tick-r { stroke: #e06060; }
.lb { fill: #161616; stroke: #4e4e4e; }
.lb-y { fill: #f7c31a; }
.axis .t-cyan, .axis3 .t-cyan { fill: #12b8c4; }
.axis .t-white { fill: #fff; }
.axis .t-black { fill: #111; }
.axis2 .t-red { fill: #d9534f; }
.axis2 .t-zero { font-size: 13px; fill: #7fb0e0; }

.a-gr { fill: #0f4a10; }
.a-rd { fill: #470e0e; }
.o-rd { fill: none; stroke: #c8655c; }
.o-gy { fill: none; stroke: #b8b8b8; }
.zero { stroke: #3333aa; }
.mark { fill: #00ffff; }
```
